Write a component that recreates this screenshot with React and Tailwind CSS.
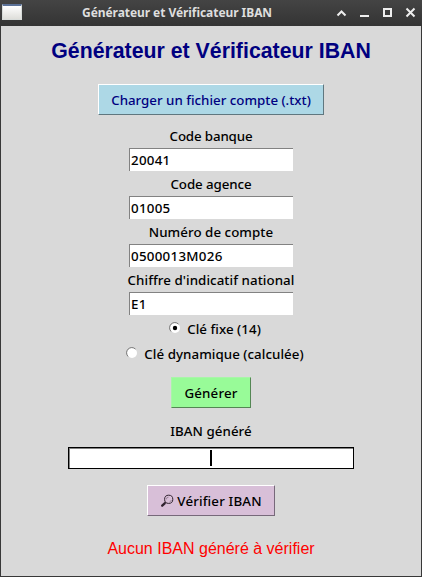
import React from 'react';

const fields = [
  { label: 'Code banque', value: '20041', spacing: 'tracking-[-0.15px]' },
  { label: 'Code agence', value: '01005', spacing: 'tracking-[-0.1px]' },
  { label: 'Numéro de compte', value: '0500013M026', spacing: 'tracking-[0.04px]' },
  { label: "Chiffre d'indicatif national", value: 'E1', spacing: 'tracking-[0.06px]' },
];

function TitleBar() {
  return (
    <header className="flex h-[26px] shrink-0 items-center justify-between bg-gradient-to-b from-[#444444] to-[#343434] text-[#eeeeee]">
      <div className="flex w-[82px] pl-[2px]">
        <div className="-mt-[2px] h-4 w-5 border border-t-2 border-[#d8dcda] border-t-[#5b7197] bg-gradient-to-b from-white to-[#dededa]" />
      </div>
      <h1 className="whitespace-nowrap font-['Noto_Sans',sans-serif] text-[12px] font-bold leading-[26px] tracking-[-0.06px] text-[#dedede]">
        Générateur et Vérificateur IBAN
      </h1>
      <svg className="ml-auto" width="88" height="26" viewBox="334 0 88 26" fill="none" stroke="#eeeeee" strokeWidth="2">
        <path d="M337.5 15.5 341.5 11.5 345.5 15.5" />
        <path d="M360 16H369" />
        <rect x="384" y="9" width="7" height="7" />
        <path d="M406.5 8.5 414.5 16.5M414.5 8.5 406.5 16.5" />
      </svg>
    </header>
  );
}

function Radio({ label, checked, className }) {
  return (
    <label className={`flex h-[25px] items-center ${className}`}>
      <svg className="-mt-[2px] shrink-0" width="12" height="12" viewBox="0 0 12 12">
        <circle cx="6" cy="6" r="5" fill="#fff" />
        <path d="M2.1 9.5A5 5 0 0 1 9.5 2.1" fill="none" stroke="#777" />
        {checked && <circle cx="6" cy="6" r="2.2" fill="#000" />}
      </svg>
      <span className="ml-[6px]">{label}</span>
    </label>
  );
}

function Magnifier() {
  return (
    <svg width="14" height="14" viewBox="0 0 14 14" fill="none" stroke="#30232f">
      <circle cx="8.7" cy="5.3" r="4.1" strokeWidth="1" />
      <path d="M6.3 5.4A2.2 2.2 0 0 1 8.5 3.2M9.5 8A3 3 0 0 0 11.4 6" stroke="#8d7689" strokeWidth=".8" />
      <path d="M5.7 8.2 4.8 9.1" strokeWidth="1" />
      <path d="M4.7 9.3 2.2 11.7" strokeWidth="2.3" strokeLinecap="round" />
    </svg>
  );
}

export default function App() {
  return (
    <div className="flex h-[577px] w-[422px] flex-col overflow-hidden bg-[#383838]">
      <TitleBar />
      <main className="mx-px mb-px flex flex-1 flex-col items-center whitespace-nowrap bg-[#d9d9d9] font-['Noto_Sans',sans-serif] text-[13.33px] font-medium leading-[24px] tracking-[0.04px] text-black">
        <h2 className="mt-[12px] h-[26px] font-['Liberation_Sans',Arial,sans-serif] text-[21.3px] font-bold leading-[26px] tracking-normal text-[#000080]">
          Générateur et Vérificateur IBAN
        </h2>
        <button className="mt-[20px] h-[31px] w-[226px] border border-white border-b-[#60777f] border-r-[#60777f] bg-[#add8e6] tracking-[-0.01px] text-[#000080]">
          Charger un fichier compte (.txt)
        </button>
        <div className="mt-[9px] flex flex-col items-center">
          {fields.map((field) => (
            <label key={field.label} className="flex h-12 flex-col items-center">
              <span className={`h-6 ${field.spacing}`}>{field.label}</span>
              <span className="h-[23px] w-[164px] border-l border-t border-[#828282] bg-white pl-px leading-[23px] tracking-[0.28px]">
                {field.value}
              </span>
            </label>
          ))}
        </div>
        <Radio label="Clé fixe (14)" checked className="ml-[8px]" />
        <Radio label="Clé dynamique (calculée)" className="ml-[8px]" />
        <button className="mt-[11px] h-[31px] w-20 border border-[#a8f5a8] border-b-[#548654] border-r-[#548654] bg-[#98fb98] tracking-[0.15px]">
          Générer
        </button>
        <div className="mt-[11px] h-6">IBAN généré</div>
        <div className="mt-1 flex h-[22px] w-[286px] border border-black bg-white">
          <div className="flex flex-1 items-center justify-center border-l border-t border-[#828282] pr-[2px]">
            <span className="-mt-px h-4 w-[2px] bg-black" />
          </div>
        </div>
        <button className="mt-4 flex h-[31px] w-32 items-center justify-center gap-[3px] border border-white border-b-[#77697a] border-r-[#77697a] bg-[#d8bfd8] tracking-[0.15px]">
          <Magnifier />
          <span>Vérifier IBAN</span>
        </button>
        <p className="mt-[21px] font-['Liberation_Sans',Arial,sans-serif] text-[16px] font-normal tracking-normal text-[#ff0000]">
          Aucun IBAN généré à vérifier
        </p>
      </main>
    </div>
  );
}
